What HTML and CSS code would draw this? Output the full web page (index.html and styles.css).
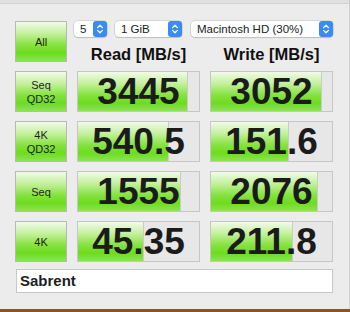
FILE: index.html
```html
<!DOCTYPE html>
<html lang="en">
<head>
    <meta charset="UTF-8">
    <meta name="viewport" content="width=device-width, initial-scale=1.0">
    <title>Disk Mark</title>
    <link rel="stylesheet" href="styles.css">
</head>
<body>
    <div class="window">
        <div class="titlebar"></div>
        <div class="panel">
            <div class="board">
                <button class="test-btn">All</button>
                <div class="head">
                    <div class="selects">
                        <div class="popup count"><span>5</span>
                            <svg class="stepper" width="14" height="16" viewBox="0 0 14 16"><rect width="14" height="16" rx="3" fill="#3a8bf3"/><path d="M4.6 6.6 L7 4.2 L9.4 6.6 M4.6 9.4 L7 11.8 L9.4 9.4" fill="none" stroke="#fff" stroke-width="1.3" stroke-linecap="round" stroke-linejoin="round"/></svg>
                        </div>
                        <div class="popup size"><span>1 GiB</span>
                            <svg class="stepper" width="14" height="16" viewBox="0 0 14 16"><rect width="14" height="16" rx="3" fill="#3a8bf3"/><path d="M4.6 6.6 L7 4.2 L9.4 6.6 M4.6 9.4 L7 11.8 L9.4 9.4" fill="none" stroke="#fff" stroke-width="1.3" stroke-linecap="round" stroke-linejoin="round"/></svg>
                        </div>
                        <div class="popup drive"><span>Macintosh HD (30%)</span>
                            <svg class="stepper" width="14" height="16" viewBox="0 0 14 16"><rect width="14" height="16" rx="3" fill="#3a8bf3"/><path d="M4.6 6.6 L7 4.2 L9.4 6.6 M4.6 9.4 L7 11.8 L9.4 9.4" fill="none" stroke="#fff" stroke-width="1.3" stroke-linecap="round" stroke-linejoin="round"/></svg>
                        </div>
                    </div>
                    <div class="labels">
                        <div>Read [MB/s]</div>
                        <div>Write [MB/s]</div>
                    </div>
                </div>

                <button class="test-btn">Seq<br>QD32</button>
                <div class="meter"><div class="fill" style="width: 90%"></div><span>3445</span></div>
                <div class="meter"><div class="fill" style="width: 91%"></div><span>3052</span></div>

                <button class="test-btn">4K<br>QD32</button>
                <div class="meter"><div class="fill" style="width: 74%"></div><span>540.5</span></div>
                <div class="meter"><div class="fill" style="width: 64%"></div><span>151.6</span></div>

                <button class="test-btn">Seq</button>
                <div class="meter"><div class="fill" style="width: 84%"></div><span>1555</span></div>
                <div class="meter"><div class="fill" style="width: 88%"></div><span>2076</span></div>

                <button class="test-btn">4K</button>
                <div class="meter"><div class="fill" style="width: 54%"></div><span>45.35</span></div>
                <div class="meter"><div class="fill" style="width: 67%"></div><span>211.8</span></div>
            </div>
            <div class="name">Sabrent</div>
        </div>
    </div>
</body>
</html>
```

FILE: styles.css
```css
body {
    margin: 0;
    width: 350px;
    height: 312px;
    background: linear-gradient(to bottom, #b8773f, #8a5426);
    font-family: "Liberation Sans", Arial, sans-serif;
    overflow: hidden;
}

.window {
    height: 309px;
    background: #ececec;
    border-right: 1px solid #cfcfcf;
    box-sizing: border-box;
}

.titlebar {
    height: 3px;
    background: #e0e0e0;
    border-bottom: 1px solid #d2d2d2;
}

.panel {
    padding: 17px 0 0 15px;
}

.board {
    display: grid;
    grid-template-columns: 52px 123px 123px;
    grid-auto-rows: 41px;
    column-gap: 10px;
    row-gap: 9px;
}

.test-btn {
    margin: 0;
    padding: 0;
    border: 1px solid #b8b8b8;
    background: linear-gradient(to bottom, #f1fbea 0%, #c4f09c 30%, #84e23e 60%, #6edc1e 80%, #8be456 100%);
    font-family: "Liberation Sans", Arial, sans-serif;
    font-size: 11px;
    line-height: 14px;
    color: #1e1e1e;
    text-align: center;
}

.head {
    grid-column: 2 / 4;
    margin-left: -3px;
}

.selects {
    display: flex;
    gap: 8px;
    height: 16px;
}

.popup {
    display: flex;
    align-items: center;
    justify-content: space-between;
    background: #fff;
    border-radius: 4px;
    box-shadow: 0 0 0 0.5px rgba(0, 0, 0, 0.18), 0 1px 1px rgba(0, 0, 0, 0.12);
    font-size: 11.5px;
    color: #222;
    padding-left: 6px;
}

.popup.count { width: 27px; }
.popup.size { width: 61px; margin-left: 0; }
.popup.drive { width: 136px; margin-left: 1px; }

.stepper {
    display: block;
    flex: none;
}

.labels {
    display: grid;
    grid-template-columns: 123px 123px;
    column-gap: 10px;
    margin: 8px 0 0 3px;
    font-size: 16.5px;
    line-height: 19px;
    font-weight: bold;
    color: #111;
    text-align: center;
}

.meter {
    position: relative;
    border: 1px solid #c6c6c6;
    background: #e7e7e7;
    display: flex;
    align-items: center;
    justify-content: center;
}

.meter .fill {
    position: absolute;
    left: 0;
    top: 0;
    bottom: 0;
    border-right: 1px solid #cbcbcb;
    background: linear-gradient(to bottom, #f1fbea 0%, #c4f09c 30%, #84e23e 60%, #6edc1e 80%, #8be456 100%);
}

.meter span {
    position: relative;
    font-size: 37px;
    font-weight: bold;
    color: #1b1b1b;
    line-height: 1;
}

.name {
    margin: 7px 0 0 1px;
    width: 317px;
    height: 24px;
    box-sizing: border-box;
    border: 1px solid #c8c8c8;
    background: #fff;
    padding-left: 3px;
    font-size: 15px;
    font-weight: bold;
    line-height: 22px;
    color: #1e1e1e;
}
```
